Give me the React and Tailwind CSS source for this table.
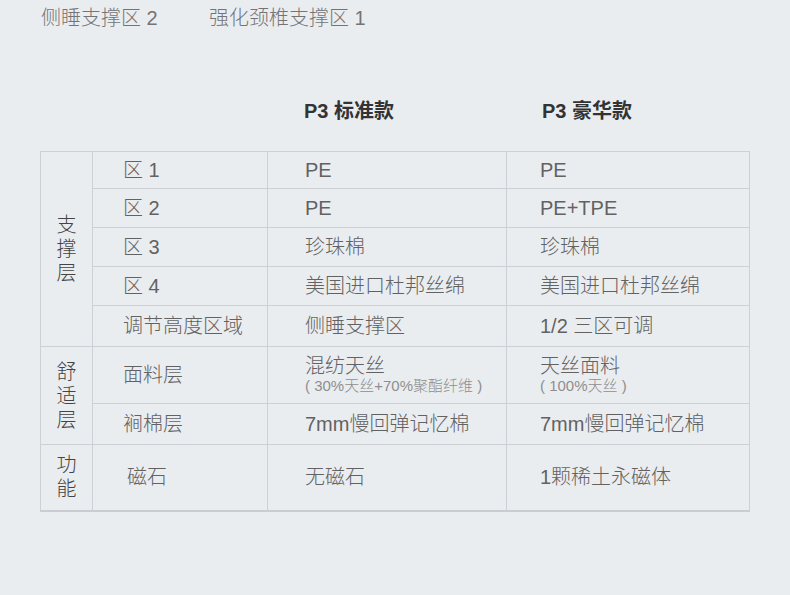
const rows = [
  { group: "支撑层", span: 5, name: "区 1", std: "PE", lux: "PE", h: "h-[37px]" },
  { name: "区 2", std: "PE", lux: "PE+TPE", h: "h-[39px]" },
  { name: "区 3", std: "珍珠棉", lux: "珍珠棉", h: "h-[39px]" },
  { name: "区 4", std: "美国进口杜邦丝绵", lux: "美国进口杜邦丝绵", h: "h-[39px]" },
  { name: "调节高度区域", std: "侧睡支撑区", lux: "1/2 三区可调", h: "h-[41px]" },
  {
    group: "舒适层",
    span: 2,
    name: "面料层",
    std: "混纺天丝",
    stdSub: "( 30%天丝+70%聚酯纤维 )",
    lux: "天丝面料",
    luxSub: "( 100%天丝 )",
    h: "h-[57px]",
  },
  { name: "裥棉层", std: "7mm慢回弹记忆棉", lux: "7mm慢回弹记忆棉", h: "h-[41px]" },
  { group: "功能", span: 1, name: "磁石", std: "无磁石", lux: "1颗稀土永磁体", h: "h-[66px]", indent: true },
];

function Cell({ main, sub, pad }) {
  return (
    <td className={`border border-[#cdd1d5] ${pad} align-middle`}>
      <div className="leading-[22px]">{main}</div>
      {sub && <div className="text-[15px] leading-[18px] text-[#8e8e8e]">{sub}</div>}
    </td>
  );
}

export default function App() {
  return (
    <div
      className="w-[790px] h-[595px] bg-[#eaedf0] overflow-hidden text-[#626262]"
      style={{ fontFamily: '"Liberation Sans", "Noto Sans CJK SC", sans-serif' }}
    >
      {/* 顶部标签 */}
      <div className="flex pl-[41px] pt-[5px] text-[20px] leading-[26px] text-[#747474] font-light">
        <span className="w-[168px]">侧睡支撑区 2</span>
        <span>强化颈椎支撑区 1</span>
      </div>

      {/* 表头 */}
      <div className="flex mt-[67px] text-[20px] leading-[26px] font-bold text-[#333]">
        <div className="w-[304px]" />
        <div className="w-[238px]">P3 标准款</div>
        <div>P3 豪华款</div>
      </div>

      {/* 表格 */}
      <table className="ml-[40px] mt-[27px] w-[709px] table-fixed border-collapse text-[20px] font-light border-b-2 border-b-[#c9cdd1]">
        <colgroup>
          <col className="w-[52px]" />
          <col className="w-[175px]" />
          <col className="w-[239px]" />
          <col className="w-[243px]" />
        </colgroup>
        <tbody>
          {rows.map((r, i) => (
            <tr key={i} className={r.h}>
              {r.group && (
                <td
                  rowSpan={r.span}
                  className="border border-[#cdd1d5] text-center align-middle text-[#444] leading-[24px]"
                >
                  {r.group.split("").map((c, j) => (
                    <div key={j}>{c}</div>
                  ))}
                </td>
              )}
              <td className={`border border-[#cdd1d5] align-middle ${r.indent ? "pl-[34px]" : "pl-[30px]"}`}>
                {r.name}
              </td>
              <Cell main={r.std} sub={r.stdSub} pad="pl-[37px]" />
              <Cell main={r.lux} sub={r.luxSub} pad="pl-[33px]" />
            </tr>
          ))}
        </tbody>
      </table>
    </div>
  );
}
